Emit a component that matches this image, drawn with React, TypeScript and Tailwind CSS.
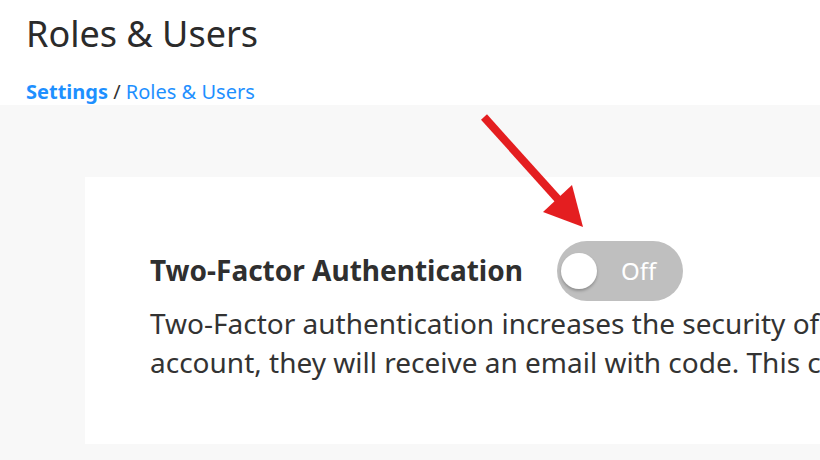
export default function App() {
  return (
    <div
      className="relative w-[820px] h-[460px] overflow-hidden bg-white text-[#333333]"
      style={{ fontFamily: '"Noto Sans", "Open Sans", sans-serif' }}
    >
      {/* Header */}
      <div className="px-[26px] pt-[11px] h-[105px]">
        <h1 className="text-[36px] leading-[46px] font-normal text-[#2b2b2b]">Roles &amp; Users</h1>
        <div className="mt-[22px] text-[20px] leading-[26px]">
          <span className="font-bold text-[#1e90ff]">Settings</span>
          <span className="text-[#333333]"> / </span>
          <span className="text-[#1e90ff]">Roles &amp; Users</span>
        </div>
      </div>

      {/* Content area */}
      <div className="bg-[#f8f8f8] h-[355px] pt-[72px] pl-[85px]">
        <div className="bg-white w-[1000px] h-[267px] pl-[65px] pt-[64px]">
          <div className="flex items-center gap-[34px]">
            <h2 className="mb-[3px] text-[28px] font-bold leading-[34px] text-[#2f2f2f]">Two-Factor Authentication</h2>
            <button className="relative w-[126px] h-[60px] rounded-full bg-[#bfbfbf] flex items-center">
              <span className="absolute left-[4px] top-[12px] w-[36px] h-[36px] rounded-full bg-white shadow-[0_2px_3px_rgba(0,0,0,0.25)]" />
              <span className="ml-[64px] text-[24px] text-white leading-none">Off</span>
            </button>
          </div>
          <p className="mt-[3px] text-[28px] leading-[39px] whitespace-nowrap">
            Two-Factor authentication increases the security of your account. When a user logs into their
          </p>
          <p className="text-[28px] leading-[39px] whitespace-nowrap">
            account, they will receive an email with code. This code must be entered to finish logging in.
          </p>
        </div>
      </div>

      {/* Annotation arrow */}
      <svg className="absolute left-0 top-0 pointer-events-none" width="820" height="460">
        <line x1="484" y1="117" x2="565" y2="207" stroke="#e41e20" strokeWidth="8" />
        <polygon points="583,227 543,212 572,185" fill="#e41e20" />
      </svg>
    </div>
  );
}
